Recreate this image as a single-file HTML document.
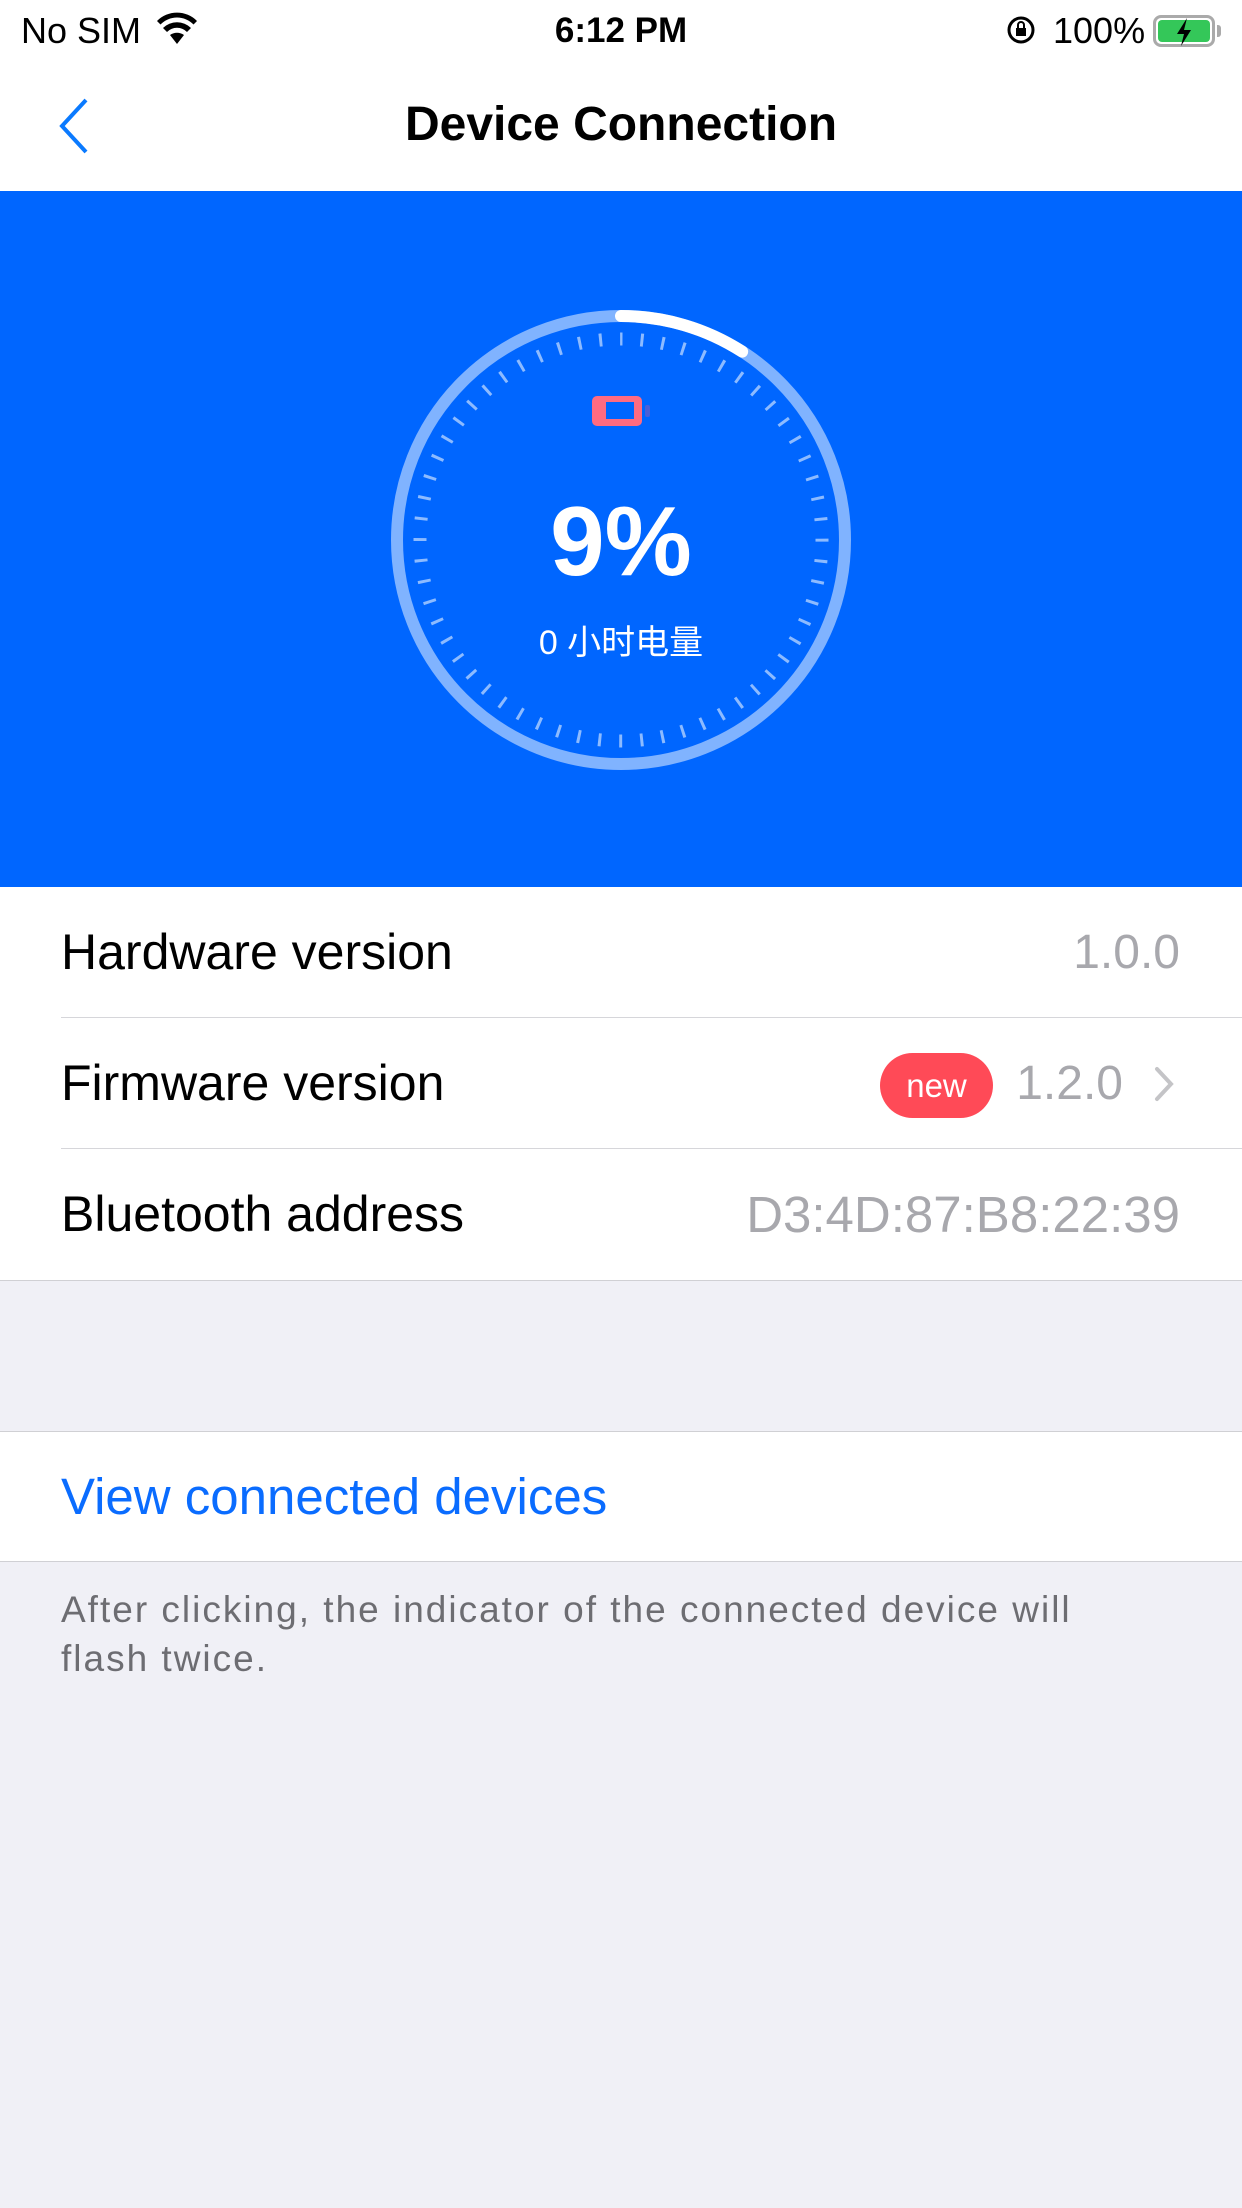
<!DOCTYPE html>
<html><head><meta charset="utf-8"><style>
*{margin:0;padding:0;box-sizing:border-box}
body{width:1242px;height:2208px;background:#f0f0f6;font-family:"Liberation Sans","Noto Sans CJK SC",sans-serif;position:relative;overflow:hidden}
.abs{position:absolute}
.top{left:0;top:0;width:1242px;height:191px;background:#fff}
.blue{left:0;top:191px;width:1242px;height:696px;background:#0066ff}
.list{left:0;top:887px;width:1242px;height:394px;background:#fff;border-bottom:1px solid #d0d0d4}
.row{position:absolute;left:61px;right:0;height:131px;font-size:50px;color:#000;line-height:131px}
.row .v{position:absolute;right:62px;top:0;color:#a8a8ad;font-size:48px}
.sep{border-bottom:1.5px solid #d6d6da}
</style></head><body>
<div class="abs top"></div>
<div class="abs" style="left:21px;top:10px;font-size:36px;line-height:42px">No SIM</div>
<svg class="abs" style="left:156px;top:12px" width="42" height="34" viewBox="0 0 42 34"><path d="M21 32 L28 23 A12 12 0 0 0 14 23 Z" fill="#000"/><path d="M7 16 A20 20 0 0 1 35 16 L31 20 A14 14 0 0 0 11 20Z" fill="#000"/><path d="M1 9 A28 28 0 0 1 41 9 L37.5 12.5 A23 23 0 0 0 4.5 12.5Z" fill="#000"/></svg>
<div class="abs" style="left:0;width:1242px;top:10px;text-align:center;font-size:35px;font-weight:bold;line-height:42px">6:12 PM</div>
<svg class="abs" style="left:1006px;top:15px" width="30" height="30" viewBox="0 0 30 30"><circle cx="15" cy="15" r="12" fill="none" stroke="#000" stroke-width="3"/><rect x="10" y="13" width="10" height="8" fill="#000"/><path d="M12 13 V10 A3 3 0 0 1 18 10 V13" fill="none" stroke="#000" stroke-width="2"/></svg>
<div class="abs" style="left:1053px;top:10px;font-size:36px;line-height:42px">100%</div>
<div class="abs" style="left:1153px;top:15px;width:62px;height:32px;border:3px solid #aaa;border-radius:8px;padding:2px"><div style="width:100%;height:100%;background:#34c759;border-radius:4px"></div></div>
<div class="abs" style="left:1217px;top:25px;width:4px;height:12px;background:#aaa;border-radius:0 3px 3px 0"></div>
<svg class="abs" style="left:1172px;top:17px" width="24" height="30" viewBox="0 0 24 30"><path d="M15 1 L5 17 H12 L9 29 L19 13 H12 Z" fill="#000"/></svg>
<svg class="abs" style="left:56px;top:96px" width="40" height="60" viewBox="0 0 40 60"><path d="M30 4 L6 30 L30 56" fill="none" stroke="#0a7aff" stroke-width="4"/></svg>
<div class="abs" style="left:0;width:1242px;top:95px;text-align:center;font-size:48px;font-weight:bold;line-height:60px">Device Connection</div>

<div class="abs blue"></div>
<svg class="abs" style="left:0;top:0" width="1242" height="900">
<circle cx="621" cy="540" r="224" fill="none" stroke="#80b3ff" stroke-width="12"/>
<circle cx="621" cy="540" r="224" fill="none" stroke="#fff" stroke-width="12" stroke-linecap="round" stroke-dasharray="128 2000" transform="rotate(-90 621 540)"/>
<circle cx="621" cy="540" r="201" fill="none" stroke="#8dbbff" stroke-width="13" stroke-dasharray="3 18.05" stroke-dashoffset="1.5" transform="rotate(-90 621 540)"/>
<rect x="592" y="396" width="50" height="30" rx="5" fill="#ff6b81"/>
<rect x="606" y="402" width="28" height="17" fill="#0066ff"/>
<rect x="645" y="405" width="5" height="12" rx="2" fill="#4a5fd8"/>
</svg>
<div class="abs" style="left:0;width:1242px;top:486px;text-align:center;color:#fff;font-size:98px;font-weight:bold;line-height:110px">9%</div>
<div class="abs" style="left:0;width:1242px;top:619px;text-align:center;color:#fff;font-size:34px;line-height:48px">0 小时电量</div>

<div class="abs list">
<div class="row sep" style="top:0">Hardware version<span class="v">1.0.0</span></div>
<div class="row sep" style="top:131px">Firmware version<span class="v" style="right:119px">1.2.0</span>
<span style="position:absolute;right:249px;top:35px;width:113px;height:65px;border-radius:33px;background:#ff4a57;color:#fff;font-size:33px;line-height:65px;text-align:center">new</span>
<svg style="position:absolute;right:67px;top:48px" width="22" height="36" viewBox="0 0 22 36"><path d="M4 3 L18 18 L4 33" fill="none" stroke="#c4c4c7" stroke-width="4" stroke-linecap="round"/></svg></div>
<div class="row" style="top:262px">Bluetooth address<span class="v" style="font-size:51px">D3:4D:87:B8:22:39</span></div>
</div>

<div class="abs" style="left:0;top:1431px;width:1242px;height:131px;background:#fff;border-top:1px solid #d0d0d4;border-bottom:1px solid #d0d0d4"></div>
<div class="abs" style="left:61px;top:1431px;line-height:131px;font-size:51px;color:#0a6cff">View connected devices</div>
<div class="abs" style="left:61px;top:1585px;width:1080px;font-size:37px;letter-spacing:2px;line-height:49px;color:#6d6d72">After clicking, the indicator of the connected device will flash twice.</div>
</body></html>
